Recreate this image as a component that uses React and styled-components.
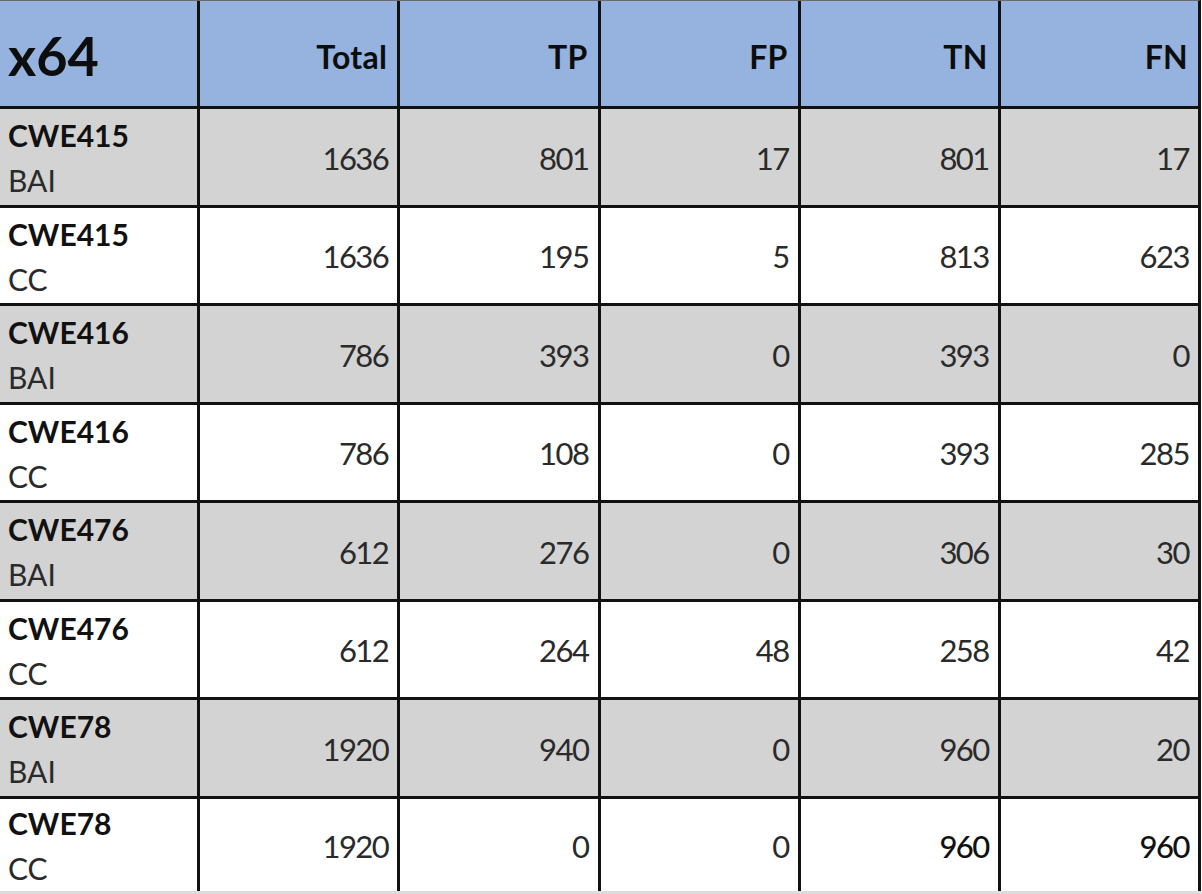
import React from "react";
import styled, { createGlobalStyle } from "styled-components";

const Global = createGlobalStyle`
  html, body { margin: 0; padding: 0; background: #ffffff; }
  body { font-family: Lato, "Open Sans", sans-serif; }
`;

const Page = styled.div`
  width: 1202px;
  height: 894px;
  overflow: hidden;
  display: flex;
  flex-direction: column;
`;

const Table = styled.div`
  width: 1198px;
  border-top: 1px solid #6a6a6a;
  border-right: 3px solid #111;
  background: #111;
  display: grid;
  grid-template-columns: repeat(6, 1fr);
  grid-template-rows: 105px repeat(7, 95.5px) 92.5px;
  gap: 3px;
`;

const HeadCell = styled.div`
  background: #95b3de;
  display: flex;
  align-items: center;
  justify-content: ${(p) => (p.$corner ? "flex-start" : "flex-end")};
  padding: ${(p) => (p.$corner ? "4px 0 0 8px" : "6px 10px 0 0")};
  font-weight: 700;
  font-size: ${(p) => (p.$corner ? "54px" : "32px")};
  letter-spacing: ${(p) => (p.$corner ? "0" : "0.3px")};
  color: #0d0d0d;
`;

const Cell = styled.div`
  background: ${(p) => (p.$shaded ? "#d3d3d3" : "#ffffff")};
  display: flex;
  align-items: center;
  justify-content: flex-end;
  padding: 2px 9px 0 0;
  font-size: 31px;
  letter-spacing: -1.5px;
  color: ${(p) => (p.$strong ? "#111" : "#2a2a2a")};
  font-weight: ${(p) => (p.$strong ? 500 : 400)};
`;

const LabelCell = styled.div`
  background: ${(p) => (p.$shaded ? "#d3d3d3" : "#ffffff")};
  display: flex;
  flex-direction: column;
  justify-content: center;
  padding: 3px 0 0 8px;
  line-height: 45px;
  font-size: 30px;
  color: #111;
`;

const LabelMain = styled.span`
  font-weight: 700;
`;

const LabelSub = styled.span`
  font-weight: 400;
  color: #2a2a2a;
`;

const Strip = styled.div`
  height: 3px;
  width: 1202px;
  background: #dcdcdc;
`;

const headers = ["Total", "TP", "FP", "TN", "FN"];

const rows = [
  ["CWE415", "BAI", [1636, 801, 17, 801, 17]],
  ["CWE415", "CC", [1636, 195, 5, 813, 623]],
  ["CWE416", "BAI", [786, 393, 0, 393, 0]],
  ["CWE416", "CC", [786, 108, 0, 393, 285]],
  ["CWE476", "BAI", [612, 276, 0, 306, 30]],
  ["CWE476", "CC", [612, 264, 48, 258, 42]],
  ["CWE78", "BAI", [1920, 940, 0, 960, 20]],
  ["CWE78", "CC", [1920, 0, 0, 960, 960]],
];

export default function App() {
  return (
    <Page>
      <Global />
      <Table>
        <HeadCell $corner>x64</HeadCell>
        {headers.map((h) => (
          <HeadCell key={h}>{h}</HeadCell>
        ))}
        {rows.map(([name, kind, vals], ri) => {
          const shaded = kind === "BAI";
          const last = ri === rows.length - 1;
          return (
            <React.Fragment key={ri}>
              <LabelCell $shaded={shaded}>
                <LabelMain>{name}</LabelMain>
                <LabelSub>{kind}</LabelSub>
              </LabelCell>
              {vals.map((v, ci) => (
                <Cell key={ci} $shaded={shaded} $strong={last && ci >= 3}>
                  {v}
                </Cell>
              ))}
            </React.Fragment>
          );
        })}
      </Table>
      <Strip />
    </Page>
  );
}
